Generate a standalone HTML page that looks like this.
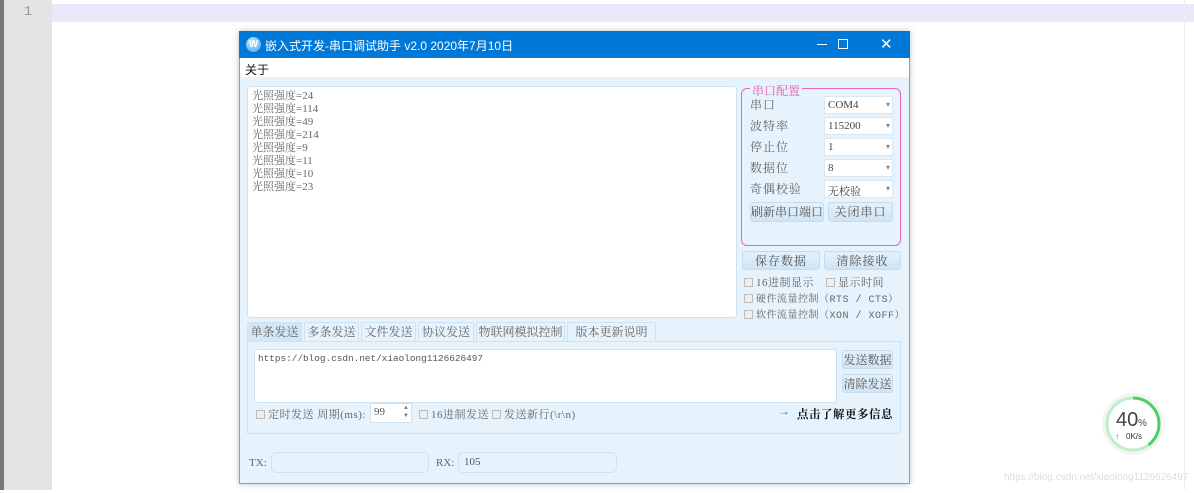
<!DOCTYPE html>
<html><head><meta charset="utf-8"><style>
*{margin:0;padding:0;box-sizing:border-box}
body{width:1194px;height:493px;background:#fff;position:relative;overflow:hidden;font-family:"Liberation Serif","Noto Serif CJK SC",serif;font-size:11px;color:#555}
.a{position:absolute}
.gut{left:0;top:0;width:52px;height:490px;background:#e4e4e4;border-left:4px solid #777}
.cmb{background:#fff;border:1px solid #d8e8f4;height:18px;width:69px;left:824px;padding:2px 3px;font-size:11px;color:#444}
.cmb:after{content:"▾";position:absolute;right:2px;top:3px;font-size:8px;color:#888}
.btn{background:linear-gradient(#e4f1fb,#cfe4f4);border:1px solid #c5dcef;border-radius:3px;text-align:center;color:#555;font-size:12px;line-height:18px;letter-spacing:1px}
.lbl{font-size:12px;color:#666;left:750px;letter-spacing:1px}
.cb{font-size:11px;color:#666;letter-spacing:.5px}
.cb i{display:inline-block;width:9px;height:9px;border:1px solid #bbb;background:#eee;margin-right:3px;vertical-align:-1px}
.tab{top:322px;height:19px;border:1px solid #cfe2f1;border-bottom:none;background:#e7f3fc;font-size:12px;color:#666;text-align:center;line-height:18px}
.m{font-family:"Liberation Mono","Noto Serif CJK SC",monospace}
</style></head><body>
<div class="a gut"></div>
<div class="a" style="left:4px;top:4px;width:48px;text-align:center;color:#999;font-size:14px;font-family:'Liberation Mono',monospace">1</div>
<div class="a" style="left:52px;top:4px;width:1142px;height:18px;background:#e8e8fa"></div>
<div class="a" style="left:1184px;top:0;width:1px;height:490px;background:#eee"></div>

<div class="a" style="left:239px;top:31px;width:671px;height:453px;background:#e6f3fc;border:1px solid #6aa8dc;box-shadow:0 0 6px rgba(0,0,0,.25)"></div>
<div class="a" style="left:239px;top:31px;width:671px;height:27px;background:#0078d7"></div>
<div class="a" style="left:246px;top:37px;width:15px;height:15px;border-radius:50%;background:radial-gradient(circle at 40% 35%,#bfe8ff,#3aa7e8);color:#fff;font:bold 10px 'Liberation Sans';text-align:center;line-height:15px">W</div>
<div class="a" style="left:265px;top:37px;color:#fff;font:12px 'Liberation Sans','Noto Sans CJK SC',sans-serif">嵌入式开发-串口调试助手 v2.0 2020年7月10日</div>
<div class="a" style="left:817px;top:44px;width:10px;height:1px;background:#fff"></div>
<div class="a" style="left:838px;top:39px;width:10px;height:10px;border:1px solid #fff"></div>
<div class="a" style="left:880px;top:35px;color:#fff;font:15px 'Liberation Sans'">✕</div>
<div class="a" style="left:240px;top:58px;width:669px;height:19px;background:#fff"></div>
<div class="a" style="left:245px;top:61px;color:#111;font:12px 'Liberation Sans','Noto Sans CJK SC',sans-serif">关于</div>

<div class="a" style="left:247px;top:86px;width:490px;height:232px;background:#fff;border:1px solid #cfe2f1;border-radius:3px;padding:3px 4px;line-height:13px;font-size:11px;color:#666">光照强度=24<br>光照强度=114<br>光照强度=49<br>光照强度=214<br>光照强度=9<br>光照强度=11<br>光照强度=10<br>光照强度=23</div>

<div class="a" style="left:741px;top:88px;width:160px;height:158px;border:1px solid #e668b8;border-radius:6px"></div>
<div class="a" style="left:750px;top:82px;background:#e6f3fc;color:#e060b0;font-size:12px;padding:0 2px">串口配置</div>
<div class="a lbl" style="top:96px">串口</div><div class="a cmb" style="top:96px">COM4</div>
<div class="a lbl" style="top:117px">波特率</div><div class="a cmb" style="top:117px">115200</div>
<div class="a lbl" style="top:138px">停止位</div><div class="a cmb" style="top:138px">1</div>
<div class="a lbl" style="top:159px">数据位</div><div class="a cmb" style="top:159px">8</div>
<div class="a lbl" style="top:180px">奇偶校验</div><div class="a cmb" style="top:180px">无校验</div>
<div class="a btn" style="left:750px;top:202px;width:74px;height:20px;letter-spacing:0">刷新串口端口</div>
<div class="a btn" style="left:828px;top:202px;width:65px;height:20px">关闭串口</div>
<div class="a btn" style="left:742px;top:251px;width:78px;height:19px">保存数据</div>
<div class="a btn" style="left:824px;top:251px;width:77px;height:19px">清除接收</div>
<div class="a cb" style="left:744px;top:274px"><i></i>16进制显示</div>
<div class="a cb" style="left:826px;top:274px"><i></i>显示时间</div>
<div class="a cb m" style="left:744px;top:290px;font-size:10px"><i></i>硬件流量控制（RTS / CTS）</div>
<div class="a cb m" style="left:744px;top:306px;font-size:10px"><i></i>软件流量控制（XON / XOFF）</div>

<div class="a tab" style="left:247px;width:55px;background:#d2e6f6">单条发送</div>
<div class="a tab" style="left:304px;width:55px">多条发送</div>
<div class="a tab" style="left:361px;width:55px">文件发送</div>
<div class="a tab" style="left:418px;width:56px">协议发送</div>
<div class="a tab" style="left:476px;width:89px">物联网模拟控制</div>
<div class="a tab" style="left:567px;width:89px">版本更新说明</div>
<div class="a" style="left:247px;top:341px;width:654px;height:93px;border:1px solid #cfe2f1"></div>
<div class="a m" style="left:254px;top:349px;width:583px;height:54px;background:#fff;border:1px solid #cfe2f1;border-radius:3px;padding:3px 3px;font-size:9.4px;color:#555">https://blog.csdn.net/xiaolong1126626497</div>
<div class="a btn" style="left:842px;top:350px;width:51px;height:19px;letter-spacing:0">发送数据</div>
<div class="a btn" style="left:842px;top:374px;width:51px;height:19px;letter-spacing:0">清除发送</div>
<div class="a cb" style="left:256px;top:406px;font-size:11px"><i></i>定时发送 周期(ms):</div>
<div class="a" style="left:370px;top:403px;width:42px;height:20px;background:#fff;border:1px solid #cfe2f1;padding:2px 3px;font-size:11px">99<span style="position:absolute;right:2px;top:0;font-size:6px;line-height:8px;color:#777">▲<br>▼</span></div>
<div class="a cb" style="left:419px;top:406px"><i></i>16进制发送</div>
<div class="a cb" style="left:492px;top:406px"><i></i>发送新行(\r\n)</div>
<div class="a" style="left:778px;top:404px;color:#2a7ad0;font-size:12px">→</div>
<div class="a" style="left:797px;top:406px;color:#111;font-size:11.5px;font-weight:bold;letter-spacing:.5px">点击了解更多信息</div>

<div class="a" style="left:249px;top:457px;font-size:11px;color:#666">TX:</div>
<div class="a" style="left:271px;top:452px;width:158px;height:21px;border:1px solid #cfe2f1;border-radius:5px"></div>
<div class="a" style="left:436px;top:457px;font-size:11px;color:#666">RX:</div>
<div class="a" style="left:458px;top:452px;width:159px;height:21px;border:1px solid #cfe2f1;border-radius:5px;padding:3px 5px;font-size:11px">105</div>

<svg class="a" style="left:1100px;top:391px" width="66" height="66">
<circle cx="33" cy="33" r="31" fill="#f4f4f4"/>
<circle cx="33" cy="33" r="26" fill="#fff" stroke="#bfeec9" stroke-width="3"/>
<circle cx="33" cy="33" r="26" fill="none" stroke="#4cd264" stroke-width="3" stroke-dasharray="65 200" transform="rotate(-90 33 33)"/>
<text x="16" y="35" font-family="Liberation Sans" font-size="20" fill="#444">40</text>
<text x="38" y="35" font-family="Liberation Sans" font-size="10" fill="#444">%</text>
<text x="15" y="48" font-family="Liberation Sans" font-size="8" fill="#2a7ad0">↑</text>
<text x="26" y="48" font-family="Liberation Sans" font-size="8" fill="#333">0K/s</text>
</svg>
<div class="a" style="left:1004px;top:472px;font:10px 'Liberation Sans';color:#ddd">https://blog.csdn.net/xiaolong1126626497</div>
</body></html>
